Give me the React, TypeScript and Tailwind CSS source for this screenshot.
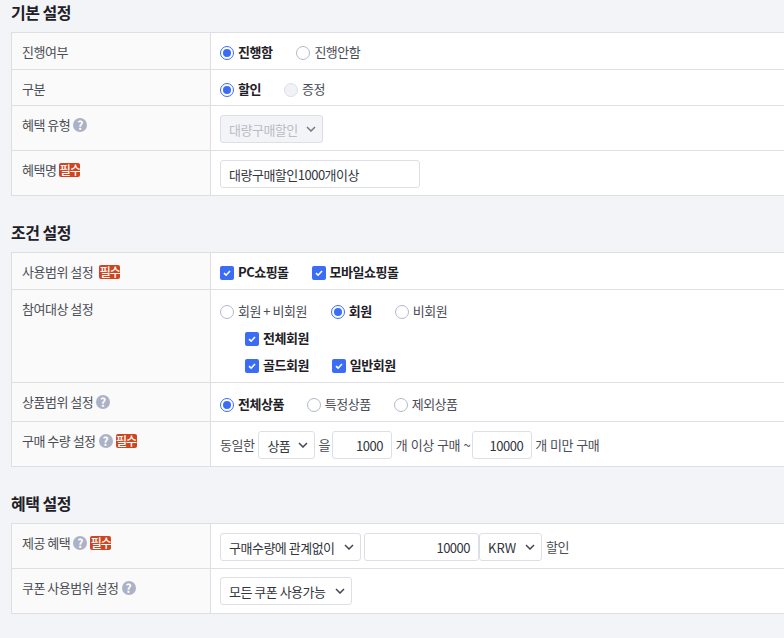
const font = { fontFamily: '"Noto Sans CJK KR", sans-serif' };

function Help() {
  return (
    <span className="inline-flex h-[14px] w-[14px] shrink-0 items-center justify-center rounded-full bg-[#acb1c6] text-[12px] font-bold leading-none tracking-normal text-white">
      ?
    </span>
  );
}

function Req() {
  return (
    <span className="inline-flex h-[14px] w-[21px] shrink-0 items-center justify-center whitespace-nowrap rounded-[2px] bg-[#cf4520] text-[12px] font-medium leading-none tracking-[-1px] text-white">
      필수
    </span>
  );
}

function Radio({ label, on, off, className }: { label: string; on?: boolean; off?: boolean; className?: string }) {
  return (
    <span className={`inline-flex items-center gap-1 ${className ?? ""}`}>
      <span
        className={`mt-[2px] flex h-[14px] w-[14px] items-center justify-center rounded-full border ${
          on ? "border-[#3b6cf6] bg-white" : off ? "border-[#dcdfe8] bg-[#f1f2f6]" : "border-[#b4b8cc] bg-white"
        }`}
      >
        {on && <span className="h-2 w-2 rounded-full bg-[#3b6cf6]" />}
      </span>
      <span className={on ? "font-bold text-[#1e2126]" : "text-[#4a4d55]"}>{label}</span>
    </span>
  );
}

function Check({ label, className }: { label: string; className?: string }) {
  return (
    <span className={`inline-flex items-center gap-1 ${className ?? ""}`}>
      <span className="mt-[2px] flex h-[14px] w-[14px] items-center justify-center rounded-[2px] bg-[#3b6cf6]">
        <svg width="10" height="10" viewBox="0 0 10 10" fill="none">
          <path d="M2 5.2 4.1 7.2 8 3" stroke="#fff" strokeWidth="1.6" />
        </svg>
      </span>
      <span className="font-bold text-[#1e2126]">{label}</span>
    </span>
  );
}

function Select({ label, className, disabled, latin }: { label: string; className: string; disabled?: boolean; latin?: boolean }) {
  return (
    <span
      className={`inline-flex h-7 items-center justify-between rounded-[3px] border border-[#dcdfe6] pl-2 pr-[6px] ${
        disabled ? "bg-[#f3f4f8] text-[#b9bcc6]" : "bg-white text-[#33363d]"
      } ${className}`}
    >
      <span className={`whitespace-nowrap pt-[2px] ${latin ? "tracking-normal" : ""}`}>{label}</span>
      <svg width="10" height="6" viewBox="0 0 10 6" fill="none" className="shrink-0">
        <path d="M1 1 5 5 9 1" stroke={disabled ? "#777a85" : "#444751"} strokeWidth="1.5" />
      </svg>
    </span>
  );
}

function Input({ value, className }: { value: string; className: string }) {
  return (
    <span className={`inline-flex h-7 items-center justify-end rounded-[3px] border border-[#dcdfe6] bg-white pr-2 pt-[2px] text-[#33363d] ${className}`}>
      {value}
    </span>
  );
}

function Row({ label, height, children, first }: { label: React.ReactNode; height: string; children: React.ReactNode; first?: boolean }) {
  return (
    <div className={`flex ${height} ${first ? "" : "border-t border-[#dedfe3]"}`}>
      <div className="w-[199px] shrink-0 border-r border-[#dedfe3] bg-[#fafafa] pl-[10px] pt-[10px] text-[#4a4d55]">
        <div className="flex h-[18px] items-center gap-[3px]">{label}</div>
      </div>
      <div className="flex-1 bg-white pl-[9px]">{children}</div>
    </div>
  );
}

function Section({ title, children, className }: { title: string; children: React.ReactNode; className?: string }) {
  return (
    <section className={className}>
      <h2 className="mb-[9px] h-[23px] text-[16px] font-bold leading-[25px] text-[#1e2126]">{title}</h2>
      <div className="w-[800px] border border-[#dedfe3]">{children}</div>
    </section>
  );
}

export default function App() {
  return (
    <div className="h-[638px] w-[784px] overflow-hidden bg-[#f3f4f8] pl-[11px] text-[13px] leading-[18px] tracking-[-0.5px]" style={font}>
      <Section title="기본 설정">
        <Row label="진행여부" height="h-9" first>
          <div className="flex h-full items-center pt-[2px]">
            <Radio label="진행함" on />
            <Radio label="진행안함" className="ml-[24px]" />
          </div>
        </Row>
        <Row label="구분" height="h-9">
          <div className="flex h-full items-center pt-[2px]">
            <Radio label="할인" on />
            <Radio label="증정" off className="ml-[23px]" />
          </div>
        </Row>
        <Row label={<><span>혜택 유형</span><Help /></>} height="h-[45px]">
          <div className="pt-[9px]">
            <Select label="대량구매할인" disabled className="w-[103px]" />
          </div>
        </Row>
        <Row label={<><span>혜택명</span><Req /></>} height="h-[45px]">
          <div className="pt-[9px]">
            <span className="inline-flex h-7 w-[200px] items-center rounded-[3px] border border-[#dcdfe6] bg-white pl-2 pt-[2px] text-[#33363d]">
              대량구매할인1000개이상
            </span>
          </div>
        </Row>
      </Section>

      <Section title="조건 설정" className="mt-[24px]">
        <Row label={<><span>사용범위 설정</span><span className="ml-[3px] flex"><Req /></span></>} height="h-9" first>
          <div className="flex h-full items-center pt-[2px]">
            <Check label="PC쇼핑몰" />
            <Check label="모바일쇼핑몰" className="ml-[23px]" />
          </div>
        </Row>
        <Row label="참여대상 설정" height="h-[93px]">
          <div className="flex flex-col pt-[12px]">
            <div className="flex h-[18px] items-center">
              <Radio label="회원 + 비회원" />
              <Radio label="회원" on className="ml-[24px]" />
              <Radio label="비회원" className="ml-[23px]" />
            </div>
            <div className="mt-[9px] flex h-[18px] items-center pl-[25px]">
              <Check label="전체회원" />
            </div>
            <div className="mt-[9px] flex h-[18px] items-center pl-[25px]">
              <Check label="골드회원" />
              <Check label="일반회원" className="ml-[23px]" />
            </div>
          </div>
        </Row>
        <Row label={<><span>상품범위 설정</span><Help /></>} height="h-[39px]">
          <div className="flex h-full items-center pt-[3px]">
            <Radio label="전체상품" on />
            <Radio label="특정상품" className="ml-[23px]" />
            <Radio label="제외상품" className="ml-[23px]" />
          </div>
        </Row>
        <Row label={<><span>구매 수량 설정</span><Help /><Req /></>} height="h-[45px]">
          <div className="flex h-full items-center pt-[2px] text-[#4a4d55]">
            <span>동일한</span>
            <Select label="상품" className="ml-1 w-[57px]" />
            <span className="ml-[3px]">을</span>
            <Input value="1000" className="ml-[2px] w-[60px]" />
            <span className="ml-1 whitespace-nowrap [word-spacing:1px]">개 이상 구매 ~</span>
            <Input value="10000" className="ml-[2px] w-[60px]" />
            <span className="ml-[3px] whitespace-nowrap [word-spacing:1px]">개 미만 구매</span>
          </div>
        </Row>
      </Section>

      <Section title="혜택 설정" className="mt-[24px]">
        <Row label={<><span>제공 혜택</span><Help /><Req /></>} height="h-[44px]" first>
          <div className="flex h-full items-center pt-[2px] text-[#4a4d55]">
            <Select label="구매수량에 관계없이" className="w-[141px]" />
            <Input value="10000" className="ml-[3px] w-[115px]" />
            <Select label="KRW" latin className="w-[63px]" />
            <span className="ml-1">할인</span>
          </div>
        </Row>
        <Row label={<><span>쿠폰 사용범위 설정</span><Help /></>} height="h-[45px]">
          <div className="flex h-full items-center">
            <Select label="모든 쿠폰 사용가능" className="w-[132px]" />
          </div>
        </Row>
      </Section>
    </div>
  );
}
